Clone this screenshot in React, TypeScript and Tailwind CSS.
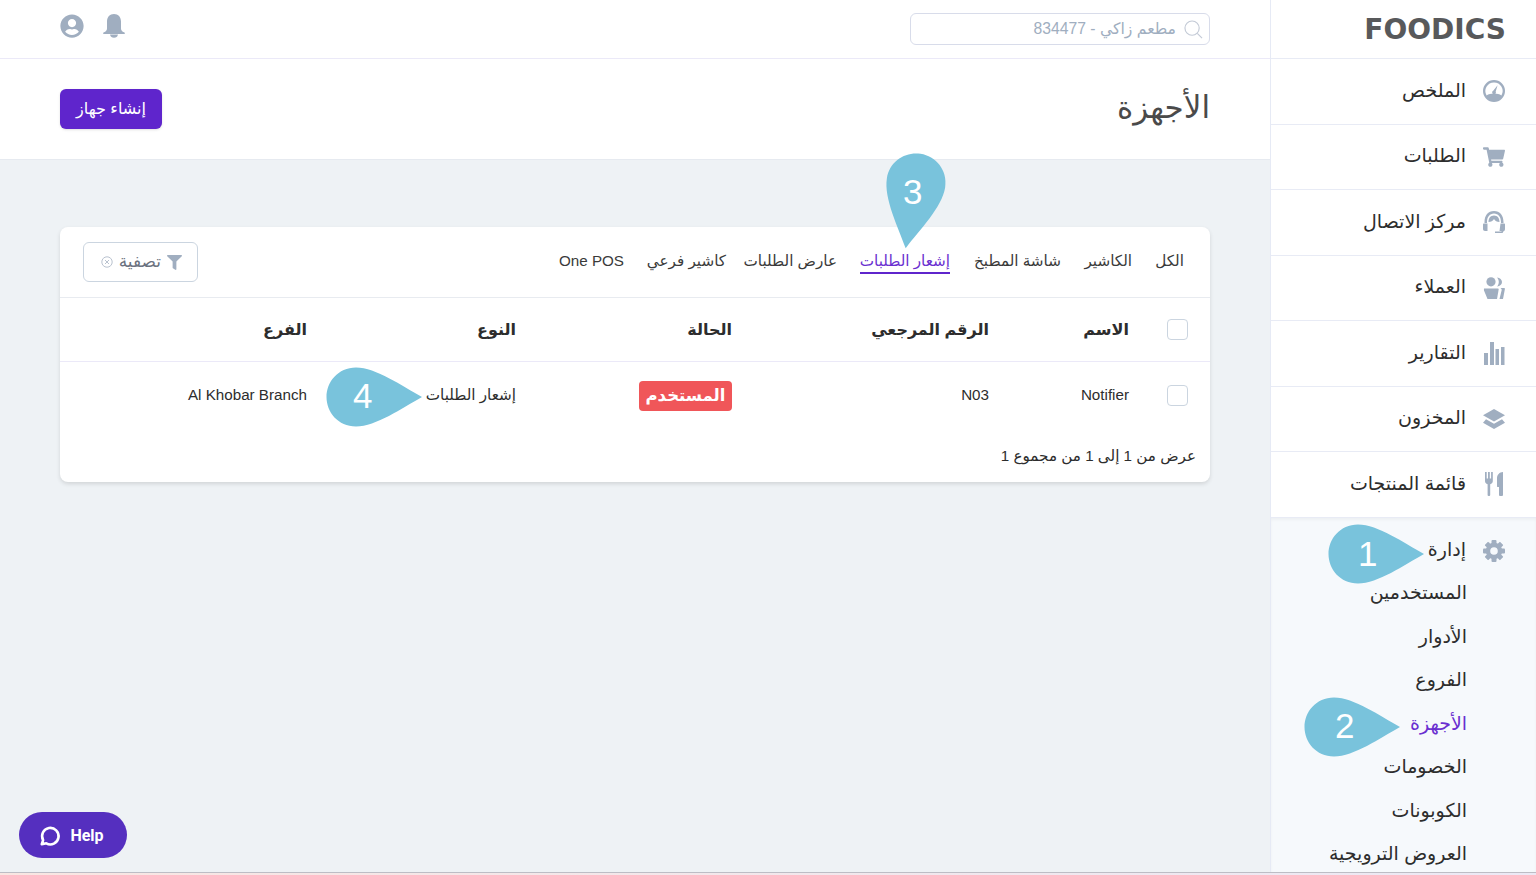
import { FaFilter, FaShoppingCart, FaUserCircle } from "react-icons/fa";

const FONT = "font-['Liberation_Sans','DejaVu_Sans',sans-serif]";
const iconCls = "w-[22px] h-[22px] text-[#a0aec0]";

const GaugeIcon = () => (
  <svg viewBox="0 0 22 22" className={iconCls} fill="currentColor">
    <path fillRule="evenodd" d="M11 0a11 11 0 1 0 0 22 11 11 0 0 0 0-22Zm0 2.4a8.6 8.6 0 0 1 7.4 13c-1.800-1.100-4.400-1.800-7.400-1.800s-5.600.7-7.400 1.800A8.600 8.600 0 0 1 11 2.400Z" />
    <path d="M14.600 5.200 12.700 11.600a1.900 1.900 0 1 1-2.500-.8l4.400-5.600Z" />
  </svg>
);

const HeadsetIcon = () => (
  <svg viewBox="0 0 22 22" className={iconCls} fill="currentColor">
    <path d="M11 0C5 0 1.500 4.500 1.500 11v1H4v-1c0-5 2.800-8.500 7-8.500s7 3.500 7 8.500v1h2.500v-1C20.500 4.500 17 0 11 0Z" />
    <path d="M11 4.500c-3.500 0-5.500 2.800-5.500 6.500 2.500 0 4.500-1 5.500-3 1 2 3 3 5.500 3 0-3.700-2-6.500-5.500-6.500Z" />
    <path d="M0 13.500c0-.6.400-1 1-1h3.500V20H2c-1.100 0-2-.9-2-2Z" />
    <path d="M17.500 12.500H21c.6 0 1 .4 1 1V18c0 1.300-.8 2.300-2 2.800V21c0 .6-.4 1-1 1h-7v-1.600h6.500V20h-2Z" />
  </svg>
);

const UsersIcon = () => (
  <svg viewBox="0 0 22 22" className={iconCls} fill="currentColor">
    <circle cx="8" cy="4.800" r="4.600" />
    <path d="M14 .4c3 .2 5 2.300 5 4.600s-2 4.300-5 4.600c1.100-1.200 1.800-2.800 1.800-4.600S15.100 1.600 14 .4Z" />
    <path d="M1 11.500h14c.4 0 .7.300.7.700L14 22H4.500L1 13.500c-.2-1 0-2 0-2Z" />
    <path d="M17.500 11h3.500c.6 0 1 .5.900 1.100L20 22h-3.500l2.200-9c.1-.7-.4-1.500-1.200-2Z" />
  </svg>
);

const BarsIcon = () => (
  <svg viewBox="0 0 22 23" className="w-[22px] h-[23px] text-[#a0aec0]" fill="currentColor">
    <rect x="1" y="11" width="4" height="12" />
    <rect x="7" y="0" width="4" height="23" />
    <rect x="12.500" y="7" width="3.500" height="16" />
    <rect x="18" y="5" width="3.500" height="18" />
  </svg>
);

const LayersIcon = () => (
  <svg viewBox="0 0 22 20" className="w-[22px] h-[20px] text-[#a0aec0]" fill="currentColor">
    <path d="M11 0 22 6.200 11 12.400 0 6.200Z" />
    <path d="M3 10.200 11 14.700l8-4.500 3 3.600L11 20 0 13.800Z" />
  </svg>
);

const CutleryIcon = () => (
  <svg viewBox="0 0 20 24" className="w-[20px] h-[24px] text-[#a0aec0]" fill="currentColor">
    <path d="M1 0h1.700v6.500h1.300V0h1.800v6.500h1.300V0h1.700v9c0 1.700-1 2.800-2.600 3.300V23a1 1 0 0 1-1 1H4.600a1 1 0 0 1-1-1V12.300C2 11.800 1 10.700 1 9Z" />
    <path d="M19 0v23a1 1 0 0 1-1 1h-2a1 1 0 0 1-1-1v-8h-1.500c-.3 0-.5-.2-.5-.5V6c0-3 2.500-6 6-6Z" />
  </svg>
);

const GearIcon = () => (
  <svg viewBox="0 0 22 22" className={iconCls} fill="currentColor">
    <circle cx="11" cy="11" r="6" fill="none" stroke="currentColor" strokeWidth="4.400" />
    {[0, 45, 90, 135].map((a) => (
      <rect key={a} x="8.500" y="0" width="5" height="22" rx="1" transform={`rotate(${a} 11 11)`} clipPath="url(#gear-teeth)" />
    ))}
    <clipPath id="gear-teeth">
      <path d="M0 0h22v6H0ZM0 16h22v6H0Z" />
    </clipPath>
  </svg>
);

const BellIcon = () => (
  <svg viewBox="0 0 22 25" className="mt-[2px] w-[22px] h-[25px]" fill="currentColor">
    <path d="M11 0c4.300 0 7 3 7 7.500v7c0 1.800 1.200 3.200 3 3.800.6.200 1 .5 1 .9 0 .5-.4.800-1 .8H1c-.6 0-1-.3-1-.8 0-.4.400-.7 1-.9 1.800-.6 3-2 3-3.800v-7C4 3 6.700 0 11 0Z" />
    <path d="M7 20.500h8a4.100 4.100 0 0 1-8 0Z" />
  </svg>
);

const Pin = ({ angle, cls }: { angle: number; cls: string }) => (
  <svg viewBox="-34 -34 68 68" className={`absolute w-[68px] h-[68px] overflow-visible ${cls}`}>
    <path
      fill="#79c3dc"
      transform={`rotate(${angle})`}
      d="M66 0C46-11 20-29.500 0-29.500-18-29.500-29.500-15-29.500 0-29.500 15-18 29.500 0 29.500 20 29.500 46 11 66 0Z"
    />
  </svg>
);

const PinLabel = ({ n, cls }: { n: string; cls: string }) => (
  <span className={`absolute text-[35px] leading-none text-white ${cls}`}>{n}</span>
);

const menu = [
  { label: "الملخص", icon: <GaugeIcon /> },
  { label: "الطلبات", icon: <FaShoppingCart className={iconCls} /> },
  { label: "مركز الاتصال", icon: <HeadsetIcon /> },
  { label: "العملاء", icon: <UsersIcon /> },
  { label: "التقارير", icon: <BarsIcon /> },
  { label: "المخزون", icon: <LayersIcon /> },
  { label: "قائمة المنتجات", icon: <CutleryIcon /> },
];

const subMenu = ["المستخدمين", "الأدوار", "الفروع", "الأجهزة", "الخصومات", "الكوبونات", "العروض الترويجية"];

const tabs = [
  { label: "الكل", width: "w-[29px]" },
  { label: "الكاشير", width: "w-[47px]" },
  { label: "شاشة المطبخ", width: "w-[89px]" },
  { label: "إشعار الطلبات", width: "w-[90px]" },
  { label: "عارض الطلبات", width: "w-[88px]" },
  { label: "كاشير فرعي", width: "w-[79px]" },
  { label: "One POS", width: "w-[65px]" },
];

const columns = "grid grid-cols-[81px_140px_257px_216px_209px_1fr]";

const Checkbox = () => <div className="w-[21px] h-[21px] mr-[22px] rounded-[4px] border border-[#cbd5e0] bg-white" />;

export default function App() {
  return (
    <div dir="rtl" className={`relative flex h-[875px] overflow-hidden bg-[#eef2f5] text-[#2d2d2d] ${FONT}`}>
      {/* Sidebar */}
      <aside className="w-[266px] shrink-0 overflow-hidden border-l border-[#e6eaf5] bg-white">
        <div className="flex h-[59px] items-center justify-end border-b border-[#e8ebf5] pr-[30px] pt-[2px]" dir="ltr">
          <span className="text-[28px] leading-none font-bold text-[#58595b] font-['DejaVu_Sans',sans-serif]">FOODICS</span>
        </div>
        {menu.map((item) => (
          <div key={item.label} className="flex h-[65.5px] items-center gap-[17px] border-b border-[#e8ebf5] pr-[31px] text-[19px]">
            <span className="flex w-[22px] justify-center">{item.icon}</span>
            <span className="-mt-[1px]">{item.label}</span>
          </div>
        ))}
        <div className="h-full bg-[#f6f9fc] shadow-[inset_0_2px_3px_rgba(0,0,0,0.04)]">
          <div className="flex h-[66px] items-center gap-[17px] pr-[31px] text-[19px]">
            <GearIcon />
            <span className="-mt-[1px]">إدارة</span>
          </div>
          <div className="-mt-[12px] flex flex-col pr-[69px] text-[19px]">
            {subMenu.map((s) => (
              <div key={s} className={`flex h-[43.5px] items-center ${s === "الأجهزة" ? "text-[#6a2fd0]" : ""}`}>
                {s}
              </div>
            ))}
          </div>
        </div>
      </aside>

      {/* Main */}
      <main className="flex min-w-0 flex-1 flex-col">
        <header className="flex h-[59px] shrink-0 items-center justify-between border-b border-[#ebe9f8] bg-white px-[60px]">
          <div className="flex h-[32px] w-[300px] items-center gap-[8px] rounded-[6px] border border-[#d8dcea] px-[6px] text-[15.7px] text-[#a0aec0]">
            <svg viewBox="0 0 20 20" className="w-[19px] h-[19px] text-[#c3cad6]" fill="none" stroke="currentColor" strokeWidth="1.200">
              <circle cx="8.500" cy="8.500" r="7.500" />
              <path d="m14 14 5 5" />
            </svg>
            <span>مطعم زاكي - 834477</span>
          </div>
          <div className="-mt-[7px] flex items-center gap-[19px] text-[#a0aec0]">
            <BellIcon />
            <FaUserCircle className="w-[24px] h-[24px]" />
          </div>
        </header>

        <div className="flex h-[101px] shrink-0 items-center justify-between border-b border-[#e6eaf0] bg-white px-[60px]">
          <h1 className="-mt-[1px] text-[31px] font-normal text-[#4a4a4a]">الأجهزة</h1>
          <button className="h-[40px] w-[102px] rounded-[6px] bg-[#5f25cc] text-[16px] text-white shadow-sm">إنشاء جهاز</button>
        </div>

        <section className="mx-[60px] mt-[67px] rounded-[8px] bg-white shadow-[0_2px_4px_rgba(0,0,0,0.12)]">
          <div className="flex h-[71px] items-center justify-between border-b border-[#e8ebf0] pl-[23px] pr-[26px]">
            <div className="flex items-center gap-[23px] text-[15.2px] text-[#3a3a3a]">
              {tabs.map((t) => (
                <span
                  key={t.label}
                  className={`${t.width} whitespace-nowrap text-center border-b-2 ${t.label === "إشعار الطلبات" ? "border-[#5f25cc] text-[#6a2fd0]" : "border-transparent"}`}
                >
                  {t.label}
                </span>
              ))}
            </div>
            <div className="flex h-[40px] w-[115px] items-center gap-[6px] rounded-[6px] border border-[#cbd5e0] pr-[15px] text-[17px] text-[#6b7280]">
              <FaFilter className="w-[15px] h-[15px] text-[#a0aec0]" />
              <span>تصفية</span>
              <svg viewBox="0 0 12 12" className="w-[12px] h-[12px] text-[#b9c2cf]" fill="none" stroke="currentColor">
                <circle cx="6" cy="6" r="5.200" />
                <path d="m4 4 4 4m0-4-4 4" />
              </svg>
            </div>
          </div>

          <div className={`${columns} h-[64px] items-center border-b border-[#ebe9f8] text-[16px] font-bold text-[#2d2d2d]`}>
            <Checkbox />
            <span>الاسم</span>
            <span>الرقم المرجعي</span>
            <span>الحالة</span>
            <span>النوع</span>
            <span>الفرع</span>
          </div>

          <div className={`${columns} h-[67px] items-center text-[15.2px]`}>
            <Checkbox />
            <span>Notifier</span>
            <span>N03</span>
            <div>
              <span className="inline-flex h-[30px] w-[93px] items-center justify-center rounded-[4px] bg-[#f05659] text-[16.5px] font-bold text-white">
                المستخدم
              </span>
            </div>
            <span>إشعار الطلبات</span>
            <span>Al Khobar Branch</span>
          </div>

          <div className="pb-[15px] pr-[14px] pt-[16px] text-[15.2px] leading-[22px]">عرض من 1 إلى 1 من مجموع 1</div>
        </section>
      </main>

      {/* Walkthrough pins */}
      <Pin angle={0} cls="left-[1324px] top-[520px]" />
      <PinLabel n="1" cls="left-[1358px] top-[536px]" />
      <Pin angle={0} cls="left-[1300px] top-[693px]" />
      <PinLabel n="2" cls="left-[1335px] top-[708px]" />
      <Pin angle={99} cls="left-[882px] top-[149px]" />
      <PinLabel n="3" cls="left-[903px] top-[174px]" />
      <Pin angle={0} cls="left-[322px] top-[363px]" />
      <PinLabel n="4" cls="left-[353px] top-[378px]" />

      <button
        dir="ltr"
        className="absolute bottom-[17px] left-[19px] flex h-[46px] w-[108px] items-center justify-center gap-[9px] rounded-full bg-[#552fbf] pr-[3px] pt-[1px] text-[16px] font-bold text-white font-['Roboto',sans-serif]"
      >
        <svg viewBox="0 0 24 24" className="w-[22px] h-[22px]" fill="none" stroke="currentColor" strokeWidth="2.800" strokeLinecap="round" strokeLinejoin="round">
          <path d="M3 21l1.500-4.500A9 9 0 1 1 8 20Z" />
        </svg>
        Help
      </button>

      {/* Page edge at the bottom of the capture */}
      <div className="absolute inset-x-0 bottom-0 h-[3px] border-t border-[#bdbdc5] bg-[linear-gradient(to_right,#f9e6e2,#ece9f5)]" />
    </div>
  );
}
